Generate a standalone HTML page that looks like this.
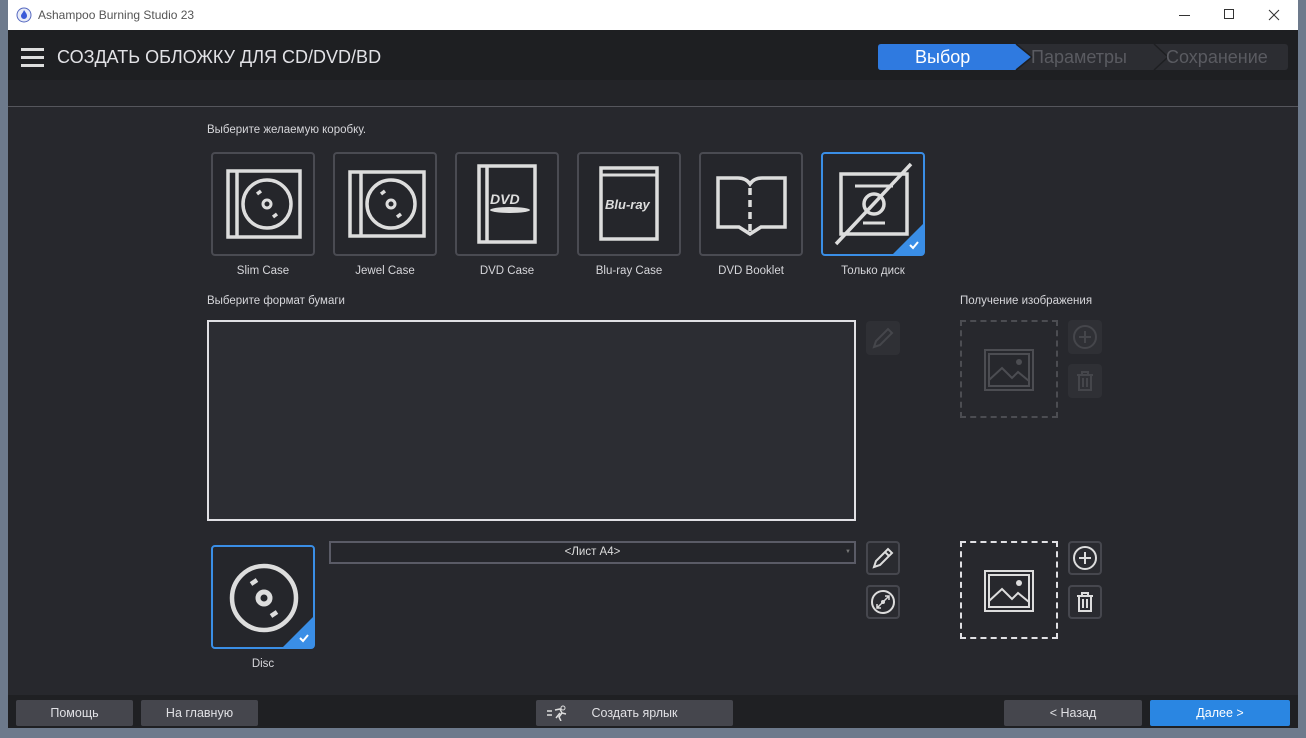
<!DOCTYPE html><html><head><meta charset="utf-8"><style>
*{margin:0;padding:0;box-sizing:border-box}
body{width:1306px;height:738px;overflow:hidden;background:#6d7a8c;font-family:"Liberation Sans",sans-serif;position:relative}
.a{position:absolute}
.win{left:8px;top:0;width:1290px;height:728px;background:#27282d}
.tb{left:8px;top:0;width:1290px;height:30px;background:#fff}
.hdr{left:8px;top:30px;width:1290px;height:50px;background:#1e1f22}
.band{left:8px;top:80px;width:1290px;height:26px;background:#232428}
.line{left:8px;top:106px;width:1290px;height:1px;background:#55565c}
.lbl{color:#d6d6da;font-size:11.5px}
.tile{width:104px;height:104px;border:2px solid #4a4b52;border-radius:4px;background:#25262b}
.tile.sel{border-color:#3a8ee6}
.cap{width:104px;text-align:center;color:#d6d6da;font-size:11.5px}
.ib{width:34px;height:34px;border:2px solid #46474e;border-radius:4px;background:#2a2b30}
.btn{height:26px;background:#45464d;color:#e0e0e4;font-size:12.5px;text-align:center;line-height:26px;border-radius:2px}
svg{position:absolute;left:0;top:0}
</style></head><body>
<div class="a win"></div>
<div class="a tb"></div>
<svg class="a" style="left:16px;top:7px" width="16" height="16"><circle cx="8" cy="8" r="7" fill="#e8ecf8" stroke="#5568c0"/><path d="M8 3c2 3 3 4 3 6a3 3 0 0 1-6 0c0-2 2-3 3-6z" fill="#3a5ad8"/></svg>
<div class="a" style="left:38px;top:8px;font-size:12px;color:#555">Ashampoo Burning Studio 23</div>
<div class="a" style="left:1179px;top:15px;width:11px;height:1px;background:#333"></div>
<div class="a" style="left:1224px;top:9px;width:10px;height:10px;border:1px solid #333"></div>
<svg class="a" style="left:1268px;top:9px" width="12" height="12"><path d="M1 1L11 11M11 1L1 11" stroke="#333"/></svg>
<div class="a hdr"></div>
<div class="a band"></div>
<div class="a line"></div>
<div class="a" style="left:21px;top:48px;width:23px;height:3px;background:#ddd;box-shadow:0 8px 0 #ddd,0 16px 0 #ddd"></div>
<div class="a" style="left:57px;top:47px;font-size:18px;color:#e2e2e6">СОЗДАТЬ ОБЛОЖКУ ДЛЯ CD/DVD/BD</div>
<svg class="a" style="left:876px;top:42px" width="424" height="30">
<rect x="2" y="2" width="410" height="26" rx="3" fill="#2c2d32"/>
<path d="M2 5Q2 2 5 2H140L156 15L140 28H5Q2 28 2 25Z" fill="#2f7ae0"/>
<path d="M140 2L156 15L140 28" fill="none" stroke="#1e1f22" stroke-width="1.5"/>
<path d="M278 2L292 15L278 28" fill="none" stroke="#1e1f22" stroke-width="1.5"/>
<text x="39" y="21" font-size="18" fill="#fff" font-family="Liberation Sans">Выбор</text>
<text x="155" y="21" font-size="18" fill="#5a5b61" font-family="Liberation Sans">Параметры</text>
<text x="290" y="21" font-size="18" fill="#5a5b61" font-family="Liberation Sans">Сохранение</text>
</svg>
<div class="a lbl" style="left:207px;top:124px">Выберите желаемую коробку.</div>

<div class="a tile" style="left:211px;top:152px"><svg width="100" height="100"><rect x="15" y="17" width="72" height="66" fill="none" stroke="#ddd" stroke-width="3.5"/><line x1="24" y1="17" x2="24" y2="83" stroke="#ddd" stroke-width="3.5"/><circle cx="54" cy="50" r="24" fill="none" stroke="#ddd" stroke-width="3.5"/><circle cx="54" cy="50" r="4" fill="none" stroke="#ddd" stroke-width="3"/><path d="M44 40l4-3M64 60l-4 3" stroke="#ddd" stroke-width="3.5"/></svg></div>
<div class="a tile" style="left:333px;top:152px"><svg width="100" height="100"><rect x="15" y="18" width="74" height="64" fill="none" stroke="#ddd" stroke-width="3.5"/><line x1="26" y1="18" x2="26" y2="82" stroke="#ddd" stroke-width="3.5"/><circle cx="56" cy="50" r="24" fill="none" stroke="#ddd" stroke-width="3.5"/><circle cx="56" cy="50" r="4" fill="none" stroke="#ddd" stroke-width="3"/><path d="M46 40l4-3M66 60l-4 3" stroke="#ddd" stroke-width="3.5"/></svg></div>
<div class="a tile" style="left:455px;top:152px"><svg width="100" height="100"><rect x="22" y="12" width="56" height="76" fill="none" stroke="#ddd" stroke-width="3.5"/><line x1="30" y1="12" x2="30" y2="88" stroke="#ddd" stroke-width="3.5"/><text x="33" y="50" font-size="14" font-weight="bold" font-style="italic" fill="#ddd" font-family="Liberation Sans">DVD</text><ellipse cx="53" cy="56" rx="20" ry="3" fill="#ddd"/></svg></div>
<div class="a tile" style="left:577px;top:152px"><svg width="100" height="100"><rect x="22" y="14" width="56" height="71" fill="none" stroke="#ddd" stroke-width="3.5"/><line x1="22" y1="21" x2="78" y2="21" stroke="#ddd" stroke-width="3"/><text x="26" y="55" font-size="13" font-weight="bold" font-style="italic" fill="#ddd" font-family="Liberation Sans">Blu-ray</text></svg></div>
<div class="a tile" style="left:699px;top:152px"><svg width="100" height="100"><path d="M17 24H37Q45 24 49 30Q53 24 61 24H84V73H60L49 80L38 73H17Z" fill="none" stroke="#ddd" stroke-width="3.5"/><line x1="49" y1="34" x2="49" y2="78" stroke="#ddd" stroke-width="3.5" stroke-dasharray="7 5"/></svg></div>
<div class="a tile sel" style="left:821px;top:152px"><svg width="100" height="100"><rect x="18" y="20" width="66" height="60" fill="none" stroke="#ddd" stroke-width="3.5"/><line x1="32" y1="32" x2="70" y2="32" stroke="#ddd" stroke-width="3"/><line x1="40" y1="69" x2="62" y2="69" stroke="#ddd" stroke-width="3"/><circle cx="51" cy="50" r="10" fill="none" stroke="#ddd" stroke-width="3.5"/><line x1="13" y1="90" x2="88" y2="10" stroke="#ddd" stroke-width="3.5"/><path d="M100 70V100H70Z" fill="#3a8ee6"/><path d="M87 91l3 3 5-6" stroke="#fff" stroke-width="2" fill="none"/></svg></div>
<div class="a cap" style="left:211px;top:265px">Slim Case</div>
<div class="a cap" style="left:333px;top:265px">Jewel Case</div>
<div class="a cap" style="left:455px;top:265px">DVD Case</div>
<div class="a cap" style="left:577px;top:265px">Blu-ray Case</div>
<div class="a cap" style="left:699px;top:265px">DVD Booklet</div>
<div class="a cap" style="left:821px;top:265px">Только диск</div>

<div class="a lbl" style="left:207px;top:295px">Выберите формат бумаги</div>
<div class="a" style="left:207px;top:320px;width:649px;height:201px;border:2px solid #e0e0e4;background:#2c2d33"></div>
<div class="a" style="left:866px;top:321px;width:34px;height:34px;border-radius:4px;background:#2f3035"><svg width="34" height="34"><path d="M8 26l2-6L22 8l4 4-12 12z" fill="none" stroke="#45464b" stroke-width="2"/></svg></div>
<div class="a lbl" style="left:960px;top:295px">Получение изображения</div>
<div class="a" style="left:960px;top:320px;width:98px;height:98px;border:2px dashed #4c4d52"></div>
<svg class="a" style="left:984px;top:348px" width="50" height="44"><rect x="1" y="2" width="48" height="40" fill="none" stroke="#4c4d52" stroke-width="2"/><rect x="5" y="6" width="40" height="32" fill="none" stroke="#4c4d52" stroke-width="2"/><path d="M5 32L18 20L28 30L34 24L45 33" fill="none" stroke="#4c4d52" stroke-width="2"/><circle cx="35" cy="14" r="3" fill="#4c4d52"/></svg>
<div class="a" style="left:1068px;top:320px;width:34px;height:34px;border-radius:4px;background:#2f3035"><svg width="34" height="34"><circle cx="17" cy="17" r="11" fill="none" stroke="#45464b" stroke-width="2"/><path d="M17 11v12M11 17h12" stroke="#45464b" stroke-width="2"/></svg></div>
<div class="a" style="left:1068px;top:364px;width:34px;height:34px;border-radius:4px;background:#2f3035"><svg width="34" height="34"><path d="M9 11h16M14 11V8h6v3M11 11v15h12V11M15 14v9M19 14v9" fill="none" stroke="#45464b" stroke-width="2"/></svg></div>

<div class="a tile sel" style="left:211px;top:545px"><svg width="100" height="100"><circle cx="51" cy="51" r="32" fill="none" stroke="#ddd" stroke-width="4.5"/><circle cx="51" cy="51" r="6" fill="none" stroke="#ddd" stroke-width="5"/><path d="M38 37l6-4M64 65l-6 4" stroke="#ddd" stroke-width="4.5"/><path d="M100 70V100H70Z" fill="#3a8ee6"/><path d="M87 91l3 3 5-6" stroke="#fff" stroke-width="2" fill="none"/></svg></div>
<div class="a cap" style="left:211px;top:658px">Disc</div>
<div class="a" style="left:329px;top:541px;width:527px;height:23px;border:2px solid #5a5b66;background:#25262b;color:#ddd;font-size:11.5px;text-align:center;line-height:19px">&lt;Лист A4&gt;<span style="position:absolute;right:3px;top:0;font-size:6px;color:#777">▼</span></div>
<div class="a ib" style="left:866px;top:541px"><svg width="30" height="30"><path d="M6 24l2-6L20 6l4 4-12 12z M17 9l4 4" fill="none" stroke="#ddd" stroke-width="2"/></svg></div>
<div class="a ib" style="left:866px;top:585px"><svg width="30" height="30"><circle cx="15" cy="15" r="11" fill="none" stroke="#ddd" stroke-width="2"/><path d="M9 21L21 9M17 9h4v4M9 17v4h4" fill="none" stroke="#ddd" stroke-width="1.5"/><circle cx="15" cy="15" r="2" fill="#ddd"/></svg></div>
<div class="a" style="left:960px;top:541px;width:98px;height:98px;border:2px dashed #e0e0e4"></div>
<svg class="a" style="left:984px;top:569px" width="50" height="44"><rect x="1" y="2" width="48" height="40" fill="none" stroke="#ddd" stroke-width="2"/><rect x="5" y="6" width="40" height="32" fill="none" stroke="#ddd" stroke-width="2"/><path d="M5 32L18 20L28 30L34 24L45 33" fill="none" stroke="#ddd" stroke-width="2"/><circle cx="35" cy="14" r="3" fill="#ddd"/></svg>
<div class="a ib" style="left:1068px;top:541px"><svg width="30" height="30"><circle cx="15" cy="15" r="11" fill="none" stroke="#ddd" stroke-width="2"/><path d="M15 9v12M9 15h12" stroke="#ddd" stroke-width="2"/></svg></div>
<div class="a ib" style="left:1068px;top:585px"><svg width="30" height="30"><path d="M7 9h16M12 9V6h6v3M9 9v15h12V9M13 12v9M17 12v9" fill="none" stroke="#ddd" stroke-width="2"/></svg></div>

<div class="a" style="left:8px;top:695px;width:1290px;height:33px;background:#1f2023"></div>
<div class="a btn" style="left:16px;top:700px;width:117px">Помощь</div>
<div class="a btn" style="left:141px;top:700px;width:117px">На главную</div>
<div class="a btn" style="left:536px;top:700px;width:197px"><svg style="left:10px;top:5px" width="22" height="16"><path d="M1 6h5M1 10h5" stroke="#ddd" stroke-width="1.5"/><circle cx="17" cy="3" r="2" fill="none" stroke="#ddd"/><path d="M9 5l5-1 2 4-3 4 2 4M14 8l-4 5M16 8l4 1" fill="none" stroke="#ddd" stroke-width="1.5"/></svg>Создать ярлык</div>
<div class="a btn" style="left:1004px;top:700px;width:138px">&lt; Назад</div>
<div class="a btn" style="left:1150px;top:700px;width:140px;background:#2a86e2;color:#fff">Далее &gt;</div>
</body></html>
